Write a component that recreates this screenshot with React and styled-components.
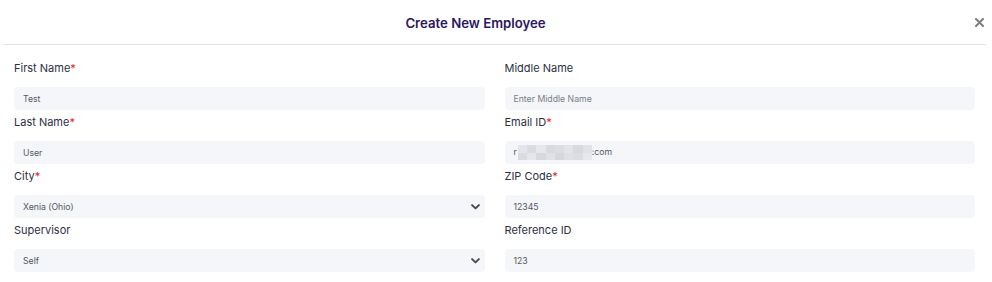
import React from "react";
import styled, { createGlobalStyle } from "styled-components";

const Global = createGlobalStyle`
  html, body { margin: 0; padding: 0; background: #ffffff; }
  body { font-family: Inter, "Noto Sans", Arial, sans-serif; }
  * { box-sizing: border-box; }
`;

const Modal = styled.div`
  margin-left: 3px;
  width: 983px;
  background: #fff;
`;

const Header = styled.div`
  display: flex;
  align-items: center;
  height: 45px;
  padding-top: 1px;
  border-bottom: 1px solid #e2e2e8;
`;

const Title = styled.h2`
  flex: 1;
  margin: 0;
  text-align: center;
  font-size: 13.2px;
  font-weight: 600;
  color: #2b1763;
  letter-spacing: 0;
`;

const Close = styled.button`
  width: 38px;
  height: 20px;
  border: 0;
  background: none;
  padding: 0 2px 0 0;
  display: flex;
  justify-content: flex-end;
  align-items: center;
  cursor: pointer;
`;

const Form = styled.div`
  display: grid;
  grid-template-columns: 1fr 1fr;
  column-gap: 20px;
  padding: 11px 11px 0 11px;
`;

const Field = styled.div`
  display: flex;
  flex-direction: column;
`;

const Label = styled.label`
  display: block;
  padding-top: 4px;
  margin-bottom: 11px;
  font-size: 11px;
  line-height: 16px;
  font-weight: 400;
  color: #2c3044;
`;

const Req = styled.span`
  color: #e02424;
`;

const Box = styled.div`
  height: 23px;
  border-radius: 4px;
  background: #f5f6fa;
  display: flex;
  align-items: center;
  justify-content: space-between;
  padding: 0 5px 0 9px;
  font-size: 8.7px;
  color: ${(p) => (p.$placeholder ? "#7a7d88" : "#55585f")};
`;

const Blur = styled.span`
  display: inline-flex;
  flex-direction: column;
  width: 74px;
  height: 15px;
  margin: 0 0 0 1px;
  vertical-align: middle;
`;

const BlurRow = styled.span`
  display: flex;
  flex: 1;
`;

const Cell = styled.span`
  flex: 1;
  background: ${(p) => p.$c};
`;

const Chevron = () => (
  <svg width="9" height="6" viewBox="0 0 9 6">
    <path d="M1.1 1.1 L4.5 4.4 L7.9 1.1" fill="none" stroke="#474a52" strokeWidth="2" strokeLinecap="round" strokeLinejoin="round" />
  </svg>
);

const blurColors = [
  ["#e4e5ea", "#d9dbe1", "#e6e7ec", "#d8dae0", "#dcdde3", "#e3e4e9", "#d7d9df", "#e1e2e7"],
  ["#dadbe1", "#e5e6eb", "#d6d8de", "#e0e1e6", "#d5d7dd", "#dfe0e5", "#dbdde2", "#e7e8ec"],
];

const EmailValue = () => (
  <span>
    r
    <Blur>
      {blurColors.map((row, i) => (
        <BlurRow key={i}>
          {row.map((c, j) => (
            <Cell key={j} $c={c} />
          ))}
        </BlurRow>
      ))}
    </Blur>
    :com
  </span>
);

const fields = [
  { label: "First Name", req: true, value: "Test" },
  { label: "Middle Name", value: "Enter Middle Name", placeholder: true },
  { label: "Last Name", req: true, value: "User" },
  { label: "Email ID", req: true, email: true },
  { label: "City", req: true, value: "Xenia (Ohio)", select: true },
  { label: "ZIP Code", req: true, value: "12345" },
  { label: "Supervisor", value: "Self", select: true },
  { label: "Reference ID", value: "123" },
];

export default function App() {
  return (
    <>
      <Global />
      <Modal>
        <Header>
          <Title>Create New Employee</Title>
          <Close aria-label="Close">
            <svg width="9" height="9" viewBox="0 0 9 9">
              <path d="M1 1 L8 8 M8 1 L1 8" stroke="#7c7c7c" strokeWidth="2" strokeLinecap="round" />
            </svg>
          </Close>
        </Header>
        <Form>
          {fields.map((f) => (
            <Field key={f.label}>
              <Label>
                {f.label}
                {f.req && <Req>*</Req>}
              </Label>
              <Box $placeholder={f.placeholder}>
                {f.email ? <EmailValue /> : <span>{f.value}</span>}
                {f.select && <Chevron />}
              </Box>
            </Field>
          ))}
        </Form>
      </Modal>
    </>
  );
}
